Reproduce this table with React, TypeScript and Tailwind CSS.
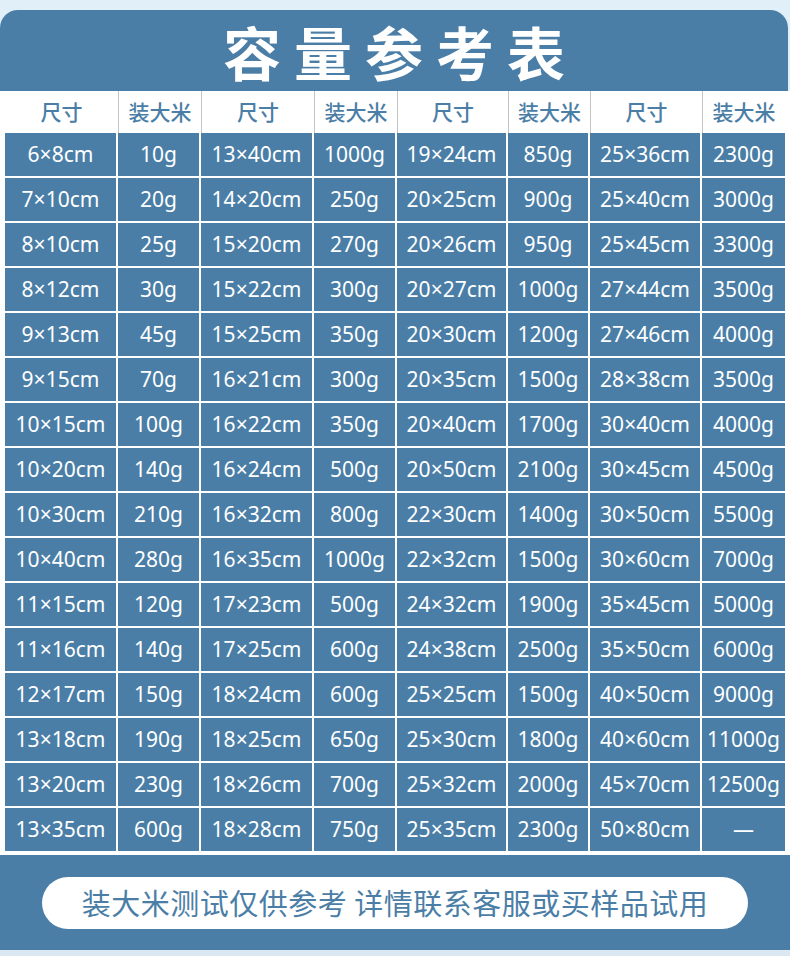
const rows: string[][] = [
  ['6×8cm', '10g', '13×40cm', '1000g', '19×24cm', '850g', '25×36cm', '2300g'],
  ['7×10cm', '20g', '14×20cm', '250g', '20×25cm', '900g', '25×40cm', '3000g'],
  ['8×10cm', '25g', '15×20cm', '270g', '20×26cm', '950g', '25×45cm', '3300g'],
  ['8×12cm', '30g', '15×22cm', '300g', '20×27cm', '1000g', '27×44cm', '3500g'],
  ['9×13cm', '45g', '15×25cm', '350g', '20×30cm', '1200g', '27×46cm', '4000g'],
  ['9×15cm', '70g', '16×21cm', '300g', '20×35cm', '1500g', '28×38cm', '3500g'],
  ['10×15cm', '100g', '16×22cm', '350g', '20×40cm', '1700g', '30×40cm', '4000g'],
  ['10×20cm', '140g', '16×24cm', '500g', '20×50cm', '2100g', '30×45cm', '4500g'],
  ['10×30cm', '210g', '16×32cm', '800g', '22×30cm', '1400g', '30×50cm', '5500g'],
  ['10×40cm', '280g', '16×35cm', '1000g', '22×32cm', '1500g', '30×60cm', '7000g'],
  ['11×15cm', '120g', '17×23cm', '500g', '24×32cm', '1900g', '35×45cm', '5000g'],
  ['11×16cm', '140g', '17×25cm', '600g', '24×38cm', '2500g', '35×50cm', '6000g'],
  ['12×17cm', '150g', '18×24cm', '600g', '25×25cm', '1500g', '40×50cm', '9000g'],
  ['13×18cm', '190g', '18×25cm', '650g', '25×30cm', '1800g', '40×60cm', '11000g'],
  ['13×20cm', '230g', '18×26cm', '700g', '25×32cm', '2000g', '45×70cm', '12500g'],
  ['13×35cm', '600g', '18×28cm', '750g', '25×35cm', '2300g', '50×80cm', '—'],
];

const headers = ['尺寸', '装大米', '尺寸', '装大米', '尺寸', '装大米', '尺寸', '装大米'];

const cjk = { fontFamily: '"Noto Sans CJK SC", "Noto Sans", sans-serif' };
const latin = { fontFamily: '"Noto Sans", "Noto Sans CJK SC", sans-serif' };

export default function App() {
  return (
    <div className="w-[790px] h-[956px] bg-[#e1eff9] pt-[10px] overflow-hidden" style={cjk}>
      {/* title bar */}
      <div className="w-[788px] h-[81px] bg-[#4a7ea6] rounded-t-[18px] flex items-center justify-center">
        <h1 className="text-white font-bold text-[58px] leading-none tracking-[13px] pl-[13px]">容量参考表</h1>
      </div>

      {/* table */}
      <div className="bg-white px-[5px] pb-[4px]">
        <div className="grid grid-cols-[113px_83px_113px_83px_111px_82px_112px_83px] h-[42px]">
          {headers.map((h, i) => (
            <div
              key={i}
              className={`flex items-center justify-center text-[#4a7ea6] text-[21px] font-medium ${i > 0 ? 'border-l border-[#c4c4c4]' : ''}`}
            >
              {h}
            </div>
          ))}
        </div>
        <div
          className="grid grid-cols-[111px_81px_111px_81px_109px_80px_110px_83px] gap-[2px] auto-rows-[43px]"
          style={latin}
        >
          {rows.flat().map((c, i) => (
            <div key={i} className="bg-[#4a7ea6] flex items-center justify-center text-white text-[21px] leading-none">
              {c}
            </div>
          ))}
        </div>
      </div>

      {/* footer note */}
      <div className="bg-[#4a7ea6] h-[95px] flex items-center justify-center">
        <div className="w-[706px] h-[52px] bg-white rounded-full flex items-center justify-center">
          <span className="text-[#4a7ea6] text-[29px] leading-none tracking-[0.5px]">
            装大米测试仅供参考 详情联系客服或买样品试用
          </span>
        </div>
      </div>
      <div className="h-[6px] bg-[#dbe7f1]" />
    </div>
  );
}
